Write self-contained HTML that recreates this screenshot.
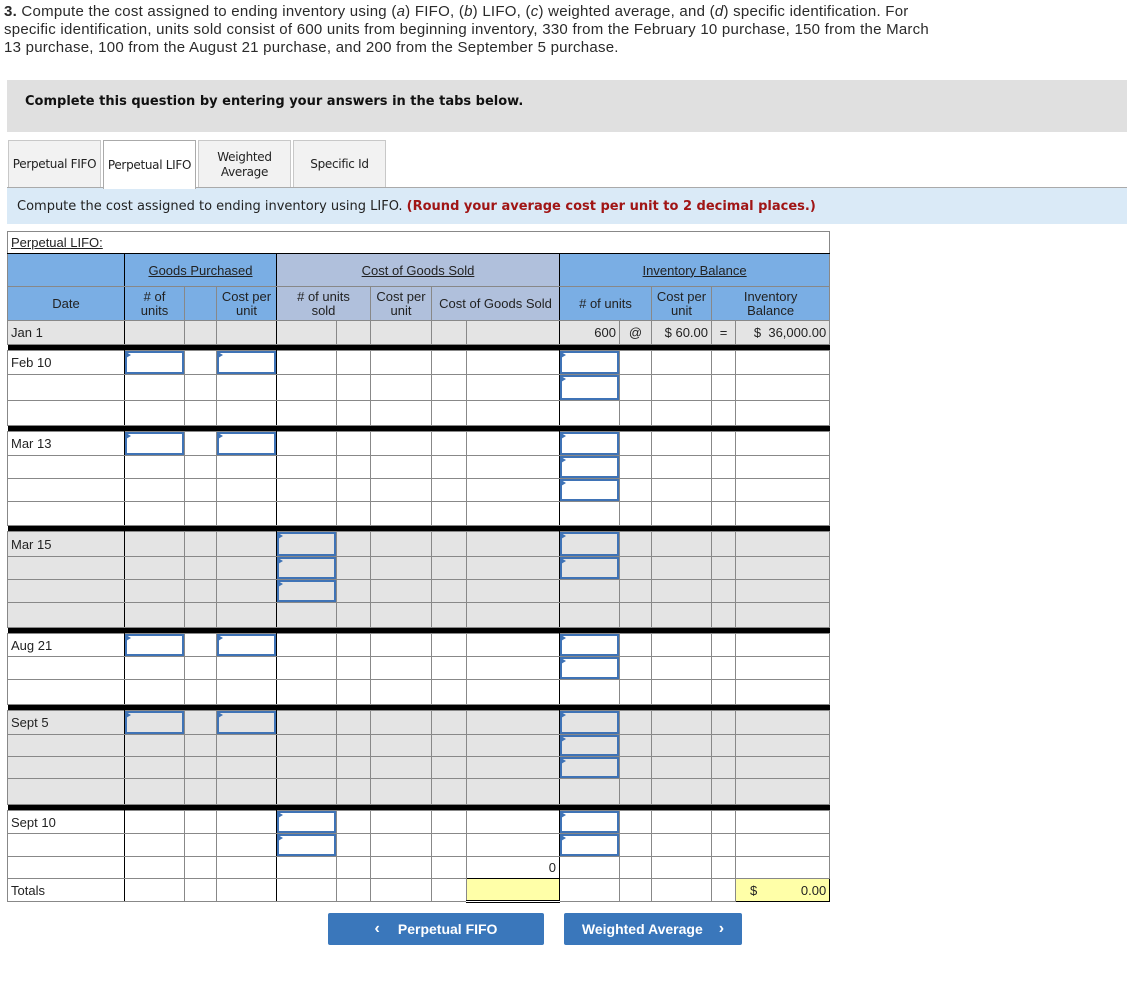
<!DOCTYPE html>
<html><head><meta charset="utf-8">
<style>
*{box-sizing:border-box}
body{margin:0;background:#fff;font-family:"Liberation Sans",Arial,sans-serif;color:#222;width:1127px;height:995px;position:relative;overflow:hidden}
.q{position:absolute;left:4px;top:3px;width:1000px;font-size:15px;line-height:18px;color:#2a2a2a;letter-spacing:0.25px;white-space:nowrap}
.gbox{position:absolute;left:7px;top:80px;width:1120px;height:52px;background:#e0e0e0}
.gbox span{position:absolute;left:18px;top:14px;font-family:"DejaVu Sans",Verdana,sans-serif;font-weight:bold;font-size:13px;color:#111}
.tab{position:absolute;top:140px;height:48px;border:1px solid #c8c8c8;border-bottom:none;background:#f2f2f2;font-family:"DejaVu Sans",Verdana,sans-serif;font-size:12px;color:#222;display:flex;align-items:center;justify-content:center;text-align:center;line-height:15px;letter-spacing:-0.3px}
.tab.a{background:#fff;border-color:#aaa;z-index:2;height:49px}
.inst{position:absolute;left:7px;top:187px;width:1120px;height:37px;background:#daeaf7;border-top:1px solid #aaa;font-family:"DejaVu Sans",Verdana,sans-serif;font-size:13px;padding:11px 0 0 10px;color:#222}
.inst b{color:#a01515}
table{position:absolute;left:7px;top:231px;border-collapse:collapse;table-layout:fixed;width:822px;font-size:13px}
td{border:1px solid #888;padding:0;position:relative;height:22px;vertical-align:middle}
tr.g td{background:#e4e4e4}
td.c0{padding-left:3px;border-right:1px solid #000}
td.bl{border-left:1px solid #000}
tr.d td:nth-child(4),tr.d td:nth-child(9){border-right:1px solid #000}
tr.bar td{background:#000;height:6px;border:none}
.in{position:absolute;left:0;top:0;right:0;bottom:0;border:2px solid #3f73b6;background:#fff}
tr.g .in{background:#e4e4e4}
.in:before{content:"";position:absolute;left:-1px;top:-1px;border-left:5px solid #3f73b6;border-top:3px solid transparent;border-bottom:3px solid transparent}
.h1 td{background:#7aaee4;height:33px;text-align:center;border-color:#888}
.h2 td{background:#7aaee4;height:34px;text-align:center;line-height:14px}
.h1 td.s,.h2 td.s{background:#b0c0dc}
u{text-decoration:underline}
.r{text-align:right;padding-right:3px}
.y{background:#ffffa8!important}
.btn{position:absolute;top:913px;height:32px;background:#3a77bb;border-radius:2px;color:#fff;font-weight:bold;font-size:14px;display:flex;align-items:center;justify-content:center}
</style></head><body>
<div class="q"><b>3.</b> Compute the cost assigned to ending inventory using (<i>a</i>) FIFO, (<i>b</i>) LIFO, (<i>c</i>) weighted average, and (<i>d</i>) specific identification. For<br>specific identification, units sold consist of 600 units from beginning inventory, 330 from the February 10 purchase, 150 from the March<br>13 purchase, 100 from the August 21 purchase, and 200 from the September 5 purchase.</div>
<div class="gbox"><span>Complete this question by entering your answers in the tabs below.</span></div>
<div class="tab" style="left:8px;width:93px">Perpetual FIFO</div>
<div class="tab a" style="left:103px;width:93px">Perpetual LIFO</div>
<div class="tab" style="left:198px;width:93px">Weighted<br>Average</div>
<div class="tab" style="left:293px;width:93px">Specific Id</div>
<div class="inst">Compute the cost assigned to ending inventory using LIFO. <b>(Round your average cost per unit to 2 decimal places.)</b></div>

<table>
<colgroup><col style="width:117px"><col style="width:60px"><col style="width:32px"><col style="width:60px"><col style="width:60px"><col style="width:34px"><col style="width:61px"><col style="width:35px"><col style="width:93px"><col style="width:60px"><col style="width:32px"><col style="width:60px"><col style="width:24px"><col style="width:94px"></colgroup>
<tr><td colspan="14" style="height:22px;padding-left:3px;border-bottom:1px solid #000"><u>Perpetual LIFO:</u></td></tr>
<tr class="h1"><td style="border-right:1px solid #000"></td><td colspan="3" style="border-right:1px solid #000"><u>Goods Purchased</u></td><td colspan="5" class="s bl" style="border-right:1px solid #000"><u>Cost of Goods Sold</u></td><td colspan="5" class="bl"><u>Inventory Balance</u></td></tr>
<tr class="h2"><td style="border-right:1px solid #000">Date</td><td># of<br>units</td><td></td><td style="border-right:1px solid #000">Cost per<br>unit</td><td colspan="2" class="s bl"># of units<br>sold</td><td class="s">Cost per<br>unit</td><td colspan="2" class="s" style="border-right:1px solid #000">Cost of Goods Sold</td><td colspan="2" class="bl"># of units</td><td>Cost per<br>unit</td><td colspan="2">Inventory<br>Balance</td></tr>
<tr class="g d" style="height:24px"><td class="c0">Jan 1</td><td></td><td></td><td></td><td class="bl"></td><td></td><td></td><td></td><td></td><td class="bl r">600</td><td style="text-align:center">@</td><td class="r">$ 60.00</td><td style="text-align:center">=</td><td class="r">$&nbsp; 36,000.00</td></tr>
<tr class="bar"><td colspan="14"></td></tr>
<tr class="d" style="height:24px"><td class="c0">Feb 10</td><td><div class="in"></div></td><td></td><td><div class="in"></div></td><td class="bl"></td><td></td><td></td><td></td><td></td><td class="bl"><div class="in"></div></td><td></td><td></td><td></td><td></td></tr>
<tr class="d" style="height:26px"><td class="c0"></td><td></td><td></td><td></td><td class="bl"></td><td></td><td></td><td></td><td></td><td class="bl"><div class="in"></div></td><td></td><td></td><td></td><td></td></tr>
<tr class="d" style="height:25px"><td class="c0"></td><td></td><td></td><td></td><td class="bl"></td><td></td><td></td><td></td><td></td><td class="bl"></td><td></td><td></td><td></td><td style="border-top:1px solid #000"></td></tr>
<tr class="bar"><td colspan="14"></td></tr>
<tr class="d" style="height:24px"><td class="c0">Mar 13</td><td><div class="in"></div></td><td></td><td><div class="in"></div></td><td class="bl"></td><td></td><td></td><td></td><td></td><td class="bl"><div class="in"></div></td><td></td><td></td><td></td><td></td></tr>
<tr class="d" style="height:23px"><td class="c0"></td><td></td><td></td><td></td><td class="bl"></td><td></td><td></td><td></td><td></td><td class="bl"><div class="in"></div></td><td></td><td></td><td></td><td></td></tr>
<tr class="d" style="height:23px"><td class="c0"></td><td></td><td></td><td></td><td class="bl"></td><td></td><td></td><td></td><td></td><td class="bl"><div class="in"></div></td><td></td><td></td><td></td><td></td></tr>
<tr class="d" style="height:24px"><td class="c0"></td><td></td><td></td><td></td><td class="bl"></td><td></td><td></td><td></td><td></td><td class="bl"></td><td></td><td></td><td></td><td style="border-top:1px solid #000"></td></tr>
<tr class="bar"><td colspan="14"></td></tr>
<tr class="g d" style="height:25px"><td class="c0">Mar 15</td><td></td><td></td><td></td><td class="bl"><div class="in"></div></td><td></td><td></td><td></td><td></td><td class="bl"><div class="in"></div></td><td></td><td></td><td></td><td></td></tr>
<tr class="g d" style="height:23px"><td class="c0"></td><td></td><td></td><td></td><td class="bl"><div class="in"></div></td><td></td><td></td><td></td><td></td><td class="bl"><div class="in"></div></td><td></td><td></td><td></td><td></td></tr>
<tr class="g d" style="height:23px"><td class="c0"></td><td></td><td></td><td></td><td class="bl"><div class="in"></div></td><td></td><td></td><td></td><td></td><td class="bl"></td><td></td><td></td><td></td><td></td></tr>
<tr class="g d" style="height:25px"><td class="c0"></td><td></td><td></td><td></td><td class="bl"></td><td></td><td></td><td></td><td style="border-top:1px solid #000"></td><td class="bl"></td><td></td><td></td><td></td><td style="border-top:1px solid #000"></td></tr>
<tr class="bar"><td colspan="14"></td></tr>
<tr class="d" style="height:23px"><td class="c0">Aug 21</td><td><div class="in"></div></td><td></td><td><div class="in"></div></td><td class="bl"></td><td></td><td></td><td></td><td></td><td class="bl"><div class="in"></div></td><td></td><td></td><td></td><td></td></tr>
<tr class="d" style="height:23px"><td class="c0"></td><td></td><td></td><td></td><td class="bl"></td><td></td><td></td><td></td><td></td><td class="bl"><div class="in"></div></td><td></td><td></td><td></td><td></td></tr>
<tr class="d" style="height:25px"><td class="c0"></td><td></td><td></td><td></td><td class="bl"></td><td></td><td></td><td></td><td></td><td class="bl"></td><td></td><td></td><td></td><td style="border-top:1px solid #000"></td></tr>
<tr class="bar"><td colspan="14"></td></tr>
<tr class="g d" style="height:24px"><td class="c0">Sept 5</td><td><div class="in"></div></td><td></td><td><div class="in"></div></td><td class="bl"></td><td></td><td></td><td></td><td></td><td class="bl"><div class="in"></div></td><td></td><td></td><td></td><td></td></tr>
<tr class="g d" style="height:22px"><td class="c0"></td><td></td><td></td><td></td><td class="bl"></td><td></td><td></td><td></td><td></td><td class="bl"><div class="in"></div></td><td></td><td></td><td></td><td></td></tr>
<tr class="g d" style="height:22px"><td class="c0"></td><td></td><td></td><td></td><td class="bl"></td><td></td><td></td><td></td><td></td><td class="bl"><div class="in"></div></td><td></td><td></td><td></td><td></td></tr>
<tr class="g d" style="height:26px"><td class="c0"></td><td></td><td></td><td></td><td class="bl"></td><td></td><td></td><td></td><td></td><td class="bl"></td><td></td><td></td><td></td><td style="border-top:1px solid #000"></td></tr>
<tr class="bar"><td colspan="14"></td></tr>
<tr class="d" style="height:23px"><td class="c0">Sept 10</td><td></td><td></td><td></td><td class="bl"><div class="in"></div></td><td></td><td></td><td></td><td></td><td class="bl"><div class="in"></div></td><td></td><td></td><td></td><td></td></tr>
<tr class="d" style="height:23px"><td class="c0"></td><td></td><td></td><td></td><td class="bl"><div class="in"></div></td><td></td><td></td><td></td><td></td><td class="bl"><div class="in"></div></td><td></td><td></td><td></td><td></td></tr>
<tr class="d" style="height:22px"><td class="c0"></td><td></td><td></td><td></td><td class="bl"></td><td></td><td></td><td></td><td class="r" style="border:1px solid #000">0</td><td class="bl"></td><td></td><td></td><td></td><td></td></tr>
<tr class="d" style="height:23px"><td class="c0">Totals</td><td></td><td></td><td></td><td class="bl"></td><td></td><td></td><td></td><td class="y" style="border:1px solid #000;border-bottom:3px double #000"></td><td class="bl"></td><td></td><td></td><td></td><td class="y r" style="border:1px solid #000"><span style="float:left;padding-left:14px">$</span>0.00</td></tr>
</table>

<div class="btn" style="left:328px;width:216px"><span style="font-size:16px;margin-right:18px">&#8249;</span>Perpetual FIFO</div>
<div class="btn" style="left:564px;width:178px">Weighted Average<span style="font-size:16px;margin-left:16px">&#8250;</span></div>
</body></html>
